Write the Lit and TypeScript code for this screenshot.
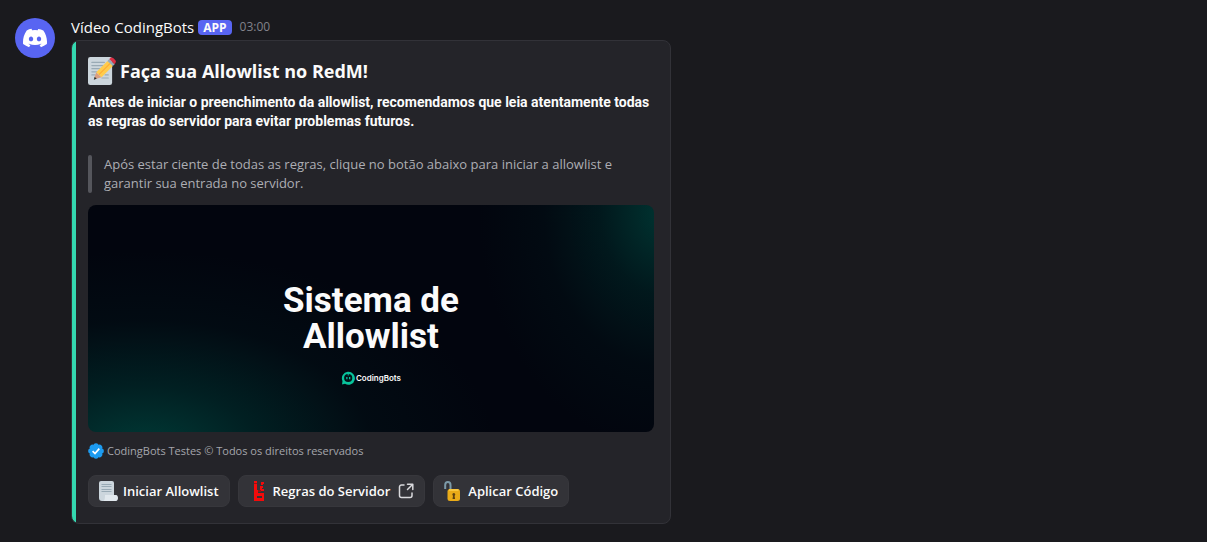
import { LitElement, html, css, svg } from "lit";
import { customElement } from "lit/decorators.js";

const discordIcon = html`<svg viewBox="0 0 24 24" width="24" height="24" aria-hidden="true">
  <path fill="#fff" d="M20.3 4.4A19.8 19.8 0 0 0 15.4 2.9a.07.07 0 0 0-.08.04c-.2.37-.44.86-.6 1.25a18.3 18.3 0 0 0-5.5 0A12.6 12.6 0 0 0 8.6 2.9a.08.08 0 0 0-.08-.04A19.7 19.7 0 0 0 3.7 4.4C.53 9.05-.32 13.6.1 18.06a.08.08 0 0 0 .03.06 19.9 19.9 0 0 0 6 3.03.08.08 0 0 0 .08-.03c.46-.63.87-1.3 1.22-2a.08.08 0 0 0-.04-.1 13.1 13.1 0 0 1-1.87-.9.08.08 0 0 1 0-.12l.37-.3a.07.07 0 0 1 .08 0 14.2 14.2 0 0 0 12.06 0 .07.07 0 0 1 .08 0l.37.3a.08.08 0 0 1 0 .12c-.6.35-1.22.65-1.87.9a.08.08 0 0 0-.04.1c.36.7.77 1.37 1.22 2a.08.08 0 0 0 .08.03 19.8 19.8 0 0 0 6-3.03.08.08 0 0 0 .03-.06c.5-5.18-.84-9.68-3.55-13.66ZM8.02 15.33c-1.18 0-2.16-1.08-2.16-2.42 0-1.33.96-2.42 2.16-2.42 1.21 0 2.18 1.1 2.16 2.42 0 1.34-.96 2.42-2.16 2.42Zm7.97 0c-1.18 0-2.15-1.08-2.15-2.42 0-1.33.95-2.42 2.15-2.42 1.22 0 2.18 1.1 2.16 2.42 0 1.34-.94 2.42-2.16 2.42Z"/>
</svg>`;

const memoIcon = html`<svg viewBox="0 0 36 36" width="28" height="28" aria-hidden="true">
  <rect x="0" y="0" width="31" height="36" rx="3" fill="#ccd6dd"/>
  <path stroke="#99aab5" stroke-width="1.6" stroke-linecap="round" d="M5 7h16M5 11h14M5 15h10M5 19h7M5 23h4M22 23h4M18 27h8"/>
  <path fill="#d99e82" d="M7.500 29 10.500 19.500l7 6.500z"/>
  <path fill="#292f33" d="m7.400 29.200 1.200-3.700 2.600 2.400z"/>
  <path fill="#ffcc4d" d="M10.500 19.500 25 5l7 6.500L17.500 26z"/>
  <path stroke="#ffac33" stroke-width="1.400" d="m14 22.800 14.500-14.500"/>
  <path fill="#99aab5" d="m25 5 2.300-2.300 7 6.500L32 11.500z"/>
  <path fill="#dd2e44" d="m27.300 2.700 1.200-1.200c1-1.100 2.700-1.200 3.900-.1l2.500 2.300c1.200 1.100 1.300 2.900.2 4L34.300 9.200z"/>
</svg>`;

const scrollIcon = html`<svg viewBox="0 0 20 20" width="20" height="20" aria-hidden="true">
  <path fill="#ccd6dd" d="M2 0h11a2 2 0 0 1 2 2v13H6v5H3a3 3 0 0 1-3-3V2a2 2 0 0 1 2-2z"/>
  <path stroke="#99aab5" stroke-width="1" d="M2.500 3.500h10M2.500 5.500h10M2.500 8.500h10M2.500 10.500h10"/>
  <path fill="#e1e8ed" d="M6 14h11c2.700 0 2.700 6 0 6H3.500c2 0 2.500-1.500 2.500-6z"/>
</svg>`;

const rulesIcon = html`<svg viewBox="0 0 20 20" width="20" height="20" aria-hidden="true">
  <path fill="#f40b0b" fill-rule="evenodd" d="M5 3h3v6h1v3h6v8H5zM8 15v2h5v-2z"/>
  <path fill="#f40b0b" d="M5 0h3v2H5zM12 1h3v2h-1v1h-2zM11 5h3v2h-1v1h2v2h-4z"/>
  <path fill="#8f1519" d="M5 2h3v1H5zM9 9h3v2H9z"/>
</svg>`;

const lockIcon = html`<svg viewBox="0 0 20 20" width="20" height="20" aria-hidden="true">
  <path fill="none" stroke="#7c9aa8" stroke-width="2" d="M1.200 8V4C1.200 0 6.500 0 6.500 4V9.500"/>
  <rect x="3.500" y="8" width="12.500" height="12" rx="2.500" fill="#eaab18"/>
  <path stroke="#ffcf4a" stroke-width="1.500" d="M5 9h9.500"/>
  <path fill="#5e4110" d="M8.300 13.500a1.500 1.500 0 0 1 3 0l-.7 1.500.5 3H8.500l.5-3z"/>
</svg>`;

const externalIcon = html`<svg viewBox="0 0 16 16" width="16" height="16" fill="none" stroke="#d9d9dc" stroke-width="1.500" stroke-linecap="round" stroke-linejoin="round" aria-hidden="true">
  <path d="M6 2H3.500A2 2 0 0 0 1.500 4v8.500a2 2 0 0 0 2 2H12a2 2 0 0 0 2-2V10M9.500 1.200h5.300v5.300M14.500 1.500 9.500 6.500"/>
</svg>`;

const verifiedIcon = html`<svg viewBox="0 0 16 16" width="16" height="16" aria-hidden="true">
  <g fill="#1d9bf0">${[0, 45, 90, 135, 180, 225, 270, 315].map(
    (a) => svg`<circle cx="8" cy="2.900" r="2.700" transform="rotate(${a} 8 8)"/>`
  )}<circle cx="8" cy="8" r="6"/></g>
  <path fill="none" stroke="#fff" stroke-width="1.700" d="m4.600 8.200 2.400 2.400 4.300-5"/>
</svg>`;

const brandIcon = html`<svg viewBox="0 0 14 14" width="14" height="14" aria-hidden="true">
  <path fill="#08c49c" d="M1 13.500 1.500 10A6.500 6.500 0 1 1 4 12.800z"/>
  <circle cx="7.200" cy="7" r="4.100" fill="#03141a"/>
  <path fill="#08c49c" d="M6.700 2h1v2.500h-1zM5.200 6h1.300v2.300H5.200zM8 6h1.300v2.300H8z"/>
</svg>`;

@customElement("app-root")
export class AppRoot extends LitElement {
  static styles = css`
    :host {
      display: block;
      min-height: 100vh;
      box-sizing: border-box;
      padding: 18px 15px;
      background: #1a1a1e;
      color: #fbfbfb;
      font-family: "Open Sans", "Noto Sans", sans-serif;
      font-size: 13px;
    }
    * { box-sizing: border-box; }
    h2, p, blockquote, figure { margin: 0; }
    svg { display: block; flex: none; }
    .message { display: flex; align-items: flex-start; gap: 16px; }
    .avatar {
      display: grid;
      place-items: center;
      flex: none;
      width: 40px;
      height: 40px;
      border-radius: 50%;
      background: #5865f2;
    }
    .body { flex: 1; min-width: 0; }
    .meta { display: flex; align-items: center; gap: 4px; height: 22px; padding-bottom: 4px; }
    .author { font-size: 15px; font-weight: 500; line-height: 18px; }
    .badge {
      padding: 0 5px;
      border-radius: 4px;
      background: #5865f2;
      font-size: 12px;
      font-weight: 700;
      line-height: 15px;
    }
    .time { margin-left: 4px; color: #82838b; font-size: 12px; line-height: 16px; }
    .card {
      max-width: 600px;
      padding: 16px;
      border: 1px solid #323238;
      border-radius: 8px;
      background: linear-gradient(90deg, #34d8b0 4px, #242429 4px);
    }
    .title { display: flex; align-items: center; gap: 4px; font-size: 18px; font-weight: 700; line-height: 28px; }
    .lead { margin-top: 8px; font-family: Roboto, sans-serif; font-size: 14px; font-weight: 700; line-height: 19px; }
    .quote {
      display: flex;
      gap: 12px;
      margin-top: 24px;
      color: #adaeb4;
      font-size: 13px;
      line-height: 19px;
    }
    .quote::before { content: ""; flex: none; width: 4px; border-radius: 4px; background: #55565c; }
    .banner {
      display: flex;
      flex-direction: column;
      align-items: center;
      justify-content: flex-end;
      gap: 16px;
      aspect-ratio: 566 / 227;
      margin-top: 12px;
      padding-bottom: 47px;
      border-radius: 8px;
      background:
        radial-gradient(ellipse 33% 105% at 102% 3%, #003532 0%, #00353266 35%, #0035321c 65%, #00353200 100%),
        radial-gradient(ellipse 62% 88% at 10% 108%, #003a36 0%, #003a3680 32%, #003a361c 65%, #003a3600 100%),
        #02050e;
    }
    .headline {
      font-family: Roboto, sans-serif;
      font-size: 35px;
      font-weight: 700;
      line-height: 36px;
      text-align: center;
    }
    .brand {
      display: flex;
      align-items: center;
      gap: 1px;
      font-family: Inter, sans-serif;
      font-size: 8px;
      font-weight: 600;
      line-height: 14px;
    }
    .footer {
      display: flex;
      align-items: center;
      gap: 3px;
      margin-top: 11px;
      color: #a5a6ac;
      font-size: 11px;
      line-height: 16px;
    }
    .actions { display: flex; flex-wrap: wrap; gap: 8px; margin-top: 16px; }
    .action {
      display: flex;
      align-items: center;
      gap: 4px;
      height: 32px;
      padding: 0 10px;
      border: 1px solid #37373c;
      border-radius: 8px;
      background: #333338;
      color: #fbfbfb;
      font: inherit;
      font-size: 13px;
      font-weight: 600;
      text-decoration: none;
      cursor: pointer;
    }
    .external { margin-left: 4px; }
  `;

  render() {
    return html`
      <article class="message">
        <div class="avatar">${discordIcon}</div>
        <div class="body">
          <header class="meta">
            <span class="author">Vídeo CodingBots</span>
            <span class="badge">APP</span>
            <time class="time">03:00</time>
          </header>
          <section class="card">
            <h2 class="title">${memoIcon}<span>Faça sua Allowlist no RedM!</span></h2>
            <p class="lead">Antes de iniciar o preenchimento da allowlist, recomendamos que leia atentamente todas as regras do servidor para evitar problemas futuros.</p>
            <blockquote class="quote"><p>Após estar ciente de todas as regras, clique no botão abaixo para iniciar a allowlist e garantir sua entrada no servidor.</p></blockquote>
            <figure class="banner">
              <div class="headline">Sistema de<br />Allowlist</div>
              <figcaption class="brand">${brandIcon}<span>CodingBots</span></figcaption>
            </figure>
            <footer class="footer">${verifiedIcon}<span>CodingBots Testes © Todos os direitos reservados</span></footer>
            <div class="actions">
              <button class="action" type="button">${scrollIcon}<span>Iniciar Allowlist</span></button>
              <a class="action" href="#regras">${rulesIcon}<span>Regras do Servidor</span><span class="external">${externalIcon}</span></a>
              <button class="action" type="button">${lockIcon}<span>Aplicar Código</span></button>
            </div>
          </section>
        </div>
      </article>
    `;
  }
}
